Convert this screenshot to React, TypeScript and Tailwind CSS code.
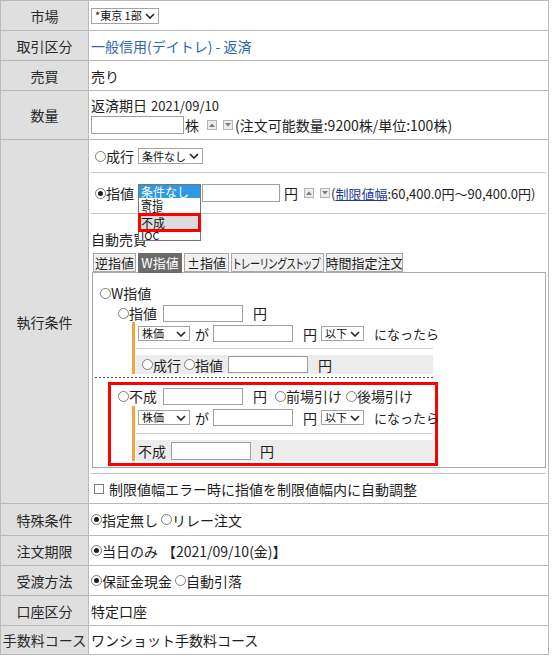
import React from "react";

function Radio({ on }: { on?: boolean }) {
  return (
    <span className="inline-flex h-[11px] w-[11px] shrink-0 items-center justify-center rounded-full border border-[#7d7d7d] bg-white">
      {on && <span className="h-[5px] w-[5px] rounded-full bg-[#1e1e1e]" />}
    </span>
  );
}

function Chevron() {
  return (
    <svg width="10" height="6" viewBox="0 0 10 6" className="shrink-0">
      <polyline points="1,1 5,5 9,1" fill="none" stroke="#222" strokeWidth="1.6" />
    </svg>
  );
}

function Select({ text, className }: { text: string; className: string }) {
  return (
    <span
      className={`inline-flex shrink-0 items-center justify-between border border-[#a3a3a3] bg-white px-[3px] text-[11px] leading-none text-[#111] ${className}`}
    >
      <span className="whitespace-nowrap">{text}</span>
      <Chevron />
    </span>
  );
}

function Input({ className }: { className: string }) {
  return <span className={`inline-block shrink-0 border border-[#9f9f9f] bg-white ${className}`} />;
}

function Spin({ up, className = "" }: { up?: boolean; className?: string }) {
  return (
    <span
      className={`inline-flex h-[10px] w-[10px] shrink-0 items-center justify-center border border-[#b4b4b4] bg-[#ececec] ${className}`}
    >
      <svg width="6" height="4" viewBox="0 0 6 4">
        <polygon points={up ? "0,4 3,0.5 6,4" : "0,0 6,0 3,3.5"} fill="#7a7a7a" />
      </svg>
    </span>
  );
}

function Opt({ on, text, className = "" }: { on?: boolean; text: string; className?: string }) {
  return (
    <span className={`flex shrink-0 items-center whitespace-nowrap ${className}`}>
      <Radio on={on} />
      <span>{text}</span>
    </span>
  );
}

function Row({
  label,
  h,
  cell = "items-center pl-[2px]",
  children,
}: {
  label: string;
  h: string;
  cell?: string;
  children: React.ReactNode;
}) {
  return (
    <div className={`flex border-b border-[#b9b9b9] ${h}`}>
      <div className="flex w-[88px] shrink-0 items-center justify-center whitespace-nowrap border-r border-[#b9b9b9] bg-[#dfdfdf] text-[#2a2a2a]">
        {label}
      </div>
      <div className={`flex min-w-0 flex-1 ${cell}`}>{children}</div>
    </div>
  );
}

// 株価 [ ] 円 以下 になったら
function Cond() {
  return (
    <div className="flex h-[17px] items-center pl-[3px]">
      <Select text="株価" className="h-[15px] w-[52px]" />
      <span className="ml-[5px]">が</span>
      <Input className="ml-[4px] h-[17px] w-[80px]" />
      <span className="ml-[10px]">円</span>
      <Select text="以下" className="ml-[4px] h-[15px] w-[43px]" />
      <span className="ml-[10px] whitespace-nowrap text-[13px]">になったら</span>
    </div>
  );
}

const tabs = [
  { label: "逆指値", w: "w-[43px]" },
  { label: "W指値", w: "w-[44px]", active: true },
  { label: "±指値", w: "w-[45px]" },
  { label: "トレーリングストップ", w: "w-[93px]", narrow: true },
  { label: "時間指定注文", w: "w-[77px]" },
];

export default function App() {
  return (
    <div className="h-[656px] w-[552px] bg-white font-['Noto_Sans_CJK_JP',sans-serif] text-[14px] leading-none text-[#1e1e1e]">
      <div className="w-[549px] border-x border-t border-[#b9b9b9]">
        <Row label="市場" h="h-[30px]">
          <Select text="*東京 1部" className="h-[16px] w-[68px]" />
        </Row>
        <Row label="取引区分" h="h-[30px]">
          <span className="text-[#2f68b0]">一般信用(デイトレ) - 返済</span>
        </Row>
        <Row label="売買" h="h-[30px]">
          <span>売り</span>
        </Row>
        <Row label="数量" h="h-[49px]" cell="flex-col pl-[2px] pt-[7px]">
          <div className="flex h-[14px] items-center whitespace-nowrap">
            返済期日 <span className="ml-[4px] text-[13px]">2021/09/10</span>
          </div>
          <div className="mt-[4px] flex items-center whitespace-nowrap">
            <Input className="h-[18px] w-[93px]" />
            <span className="ml-[1px]">株</span>
            <Spin up className="ml-[8px]" />
            <Spin className="ml-[6px]" />
            <span className="ml-[2px]">(注文可能数量:9200株/単位:100株)</span>
          </div>
        </Row>

        <Row label="執行条件" h="h-[364px]" cell="flex-col px-[2px]">
          {/* 成行 */}
          <div className="flex h-[33px] shrink-0 items-center border-b border-[#c4c4c4] pl-[4px]">
            <Opt text="成行" />
            <Select text="条件なし" className="ml-[4px] h-[16px] w-[65px]" />
          </div>

          {/* 指値 + open list */}
          <div className="flex h-[41px] shrink-0 items-center whitespace-nowrap border-b border-[#c4c4c4] pl-[4px]">
            <Opt on text="指値" />
            <span className="relative ml-[4px] inline-block h-[18px] w-[62px] shrink-0">
              <span className="absolute left-0 top-0 z-20 flex h-[57px] w-[63px] flex-col overflow-hidden border border-[#767676] bg-white text-[11px] leading-[11px] text-[#111]">
                <span className="h-[13px] shrink-0 bg-[#2f98e0] pl-[2px] text-[12px] leading-[13px] text-white">条件なし</span>
                <span className="h-[12px] shrink-0 pl-[2px] leading-[12px]">寄指</span>
                <span className="h-[6px] shrink-0 overflow-hidden pl-[2px]">引指</span>
                <span className="h-[14px] shrink-0 bg-[#dcdcdc] pl-[2px] text-[12px] leading-[14px]">不成</span>
                <span className="h-[11px] shrink-0 overflow-hidden pl-[2px]">IOC</span>
              </span>
              <span className="absolute left-0 top-[29px] z-30 h-[19px] w-[63px] border-[3px] border-[#ff0000]" />
            </span>
            <Input className="ml-[2px] h-[18px] w-[78px]" />
            <span className="ml-[4px]">円</span>
            <Spin up className="ml-[6px]" />
            <Spin className="ml-[6px]" />
            <span className="ml-[1px] text-[13px]">
              (<a className="text-[#23399b] underline">制限値幅</a>:60,400.0円～90,400.0円)
            </span>
          </div>

          {/* 自動売買 */}
          <div className="flex h-[260px] shrink-0 flex-col border-b border-[#c4c4c4] pt-[16px]">
            <div className="h-[18px] leading-[18px]">自動売買</div>
            <div className="ml-[2px] mt-[5px] flex h-[19px] items-start gap-[2px] text-[13px] [font-feature-settings:'palt']">
              {tabs.map((t) =>
                t.active ? (
                  <span
                    key={t.label}
                    className={`relative z-10 flex h-[20px] items-center justify-center bg-[#6b6b6b] pb-[2px] text-white ${t.w}`}
                  >
                    {t.label}
                  </span>
                ) : (
                  <span
                    key={t.label}
                    className={`flex h-[19px] items-center justify-center overflow-hidden whitespace-nowrap border border-[#a8a8a8] bg-[#f0f0f0] ${t.w}`}
                  >
                    {t.narrow ? (
                      <span className="inline-block shrink-0 scale-x-[0.78]">{t.label}</span>
                    ) : (
                      t.label
                    )}
                  </span>
                )
              )}
            </div>

            <div className="ml-[1px] flex h-[196px] flex-col border border-[#a8a8a8] pt-[11px]">
              <div className="flex h-[18px] items-center pl-[7px]">
                <Opt text="W指値" />
              </div>

              {/* W指値 - 指値 */}
              <div className="ml-[15px] w-[330px] border-x-[3px] border-transparent pl-[7px] pt-[2px]">
                <div className="flex h-[18px] items-center">
                  <Opt text="指値" />
                  <Input className="ml-[6px] h-[17px] w-[80px]" />
                  <span className="ml-[10px]">円</span>
                </div>
                <div className="ml-[14px] mr-[2px] border-l-[3px] border-[#f5a23c] pt-[3px]">
                  <Cond />
                  <div className="ml-[1px] mt-[6px] h-px bg-[#d0d0d0]" />
                  <div className="ml-[1px] mt-[6px] flex h-[19px] items-center bg-[#ececec] pl-[6px]">
                    <Opt text="成行" />
                    <Opt text="指値" className="ml-[3px]" />
                    <Input className="ml-[5px] h-[17px] w-[80px]" />
                    <span className="ml-[10px]">円</span>
                  </div>
                </div>
              </div>

              <div className="ml-[2px] mt-[3px] h-px w-[340px] bg-[linear-gradient(to_right,#555_50%,transparent_50%)] bg-[length:4px_1px]" />

              {/* 不成 */}
              <div className="ml-[15px] mt-[4px] w-[330px] border-[3px] border-[#ff0000] pb-[2px] pl-[7px] pt-[2px]">
                <div className="flex h-[18px] items-center whitespace-nowrap">
                  <Opt text="不成" />
                  <Input className="ml-[6px] h-[17px] w-[80px]" />
                  <span className="ml-[10px]">円</span>
                  <Opt text="前場引け" className="ml-[8px]" />
                  <Opt text="後場引け" className="ml-[4px]" />
                </div>
                <div className="ml-[14px] mr-[2px] mt-[1px] border-l-[3px] border-[#f5a23c] pt-[3px]">
                  <Cond />
                  <div className="ml-[1px] mt-[7px] h-px bg-[#d0d0d0]" />
                  <div className="ml-[1px] mt-[6px] flex h-[21px] items-center bg-[#ececec] pl-[2px]">
                    <span>不成</span>
                    <Input className="ml-[5px] h-[18px] w-[80px]" />
                    <span className="ml-[9px]">円</span>
                  </div>
                </div>
              </div>
            </div>
          </div>

          {/* 自動調整 */}
          <div className="flex h-[29px] shrink-0 items-center whitespace-nowrap pl-[3px]">
            <span className="h-[10px] w-[10px] shrink-0 border border-[#7d7d7d] bg-white" />
            <span className="ml-[5px]">制限値幅エラー時に指値を制限値幅内に自動調整</span>
          </div>
        </Row>

        <Row label="特殊条件" h="h-[32px]">
          <Opt on text="指定無し" />
          <Opt text="リレー注文" className="ml-[3px]" />
        </Row>
        <Row label="注文期限" h="h-[30px]">
          <Opt on text="当日のみ" />
          <span className="ml-[4px] whitespace-nowrap">【2021/09/10(金)】</span>
        </Row>
        <Row label="受渡方法" h="h-[30px]">
          <Opt on text="保証金現金" />
          <Opt text="自動引落" className="ml-[3px]" />
        </Row>
        <Row label="口座区分" h="h-[30px]">
          <span>特定口座</span>
        </Row>
        <Row label="手数料コース" h="h-[29px]">
          <span className="whitespace-nowrap">ワンショット手数料コース</span>
        </Row>
      </div>
    </div>
  );
}
